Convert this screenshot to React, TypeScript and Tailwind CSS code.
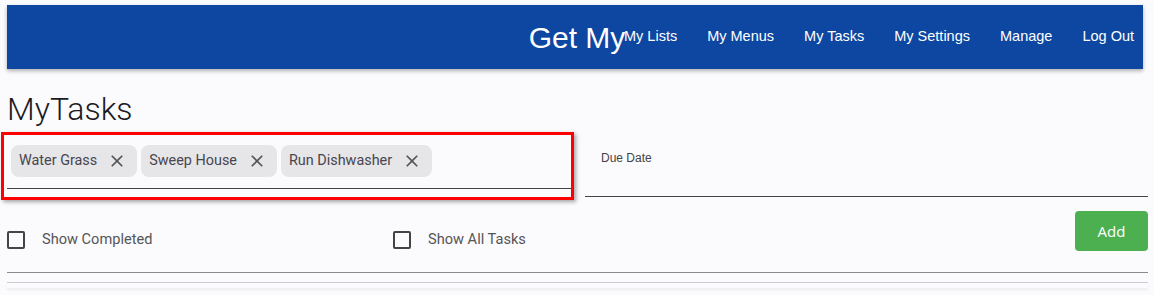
const navItems = ['My Lists', 'My Menus', 'My Tasks', 'My Settings', 'Manage', 'Log Out'];
const tasks = ['Water Grass', 'Sweep House', 'Run Dishwasher'];

function CloseIcon() {
  return (
    <svg viewBox="0 0 24 24" className="w-[20px] h-[20px] fill-[#555]">
      <path d="M19 6.41 17.59 5 12 10.59 6.41 5 5 6.41 10.59 12 5 17.59 6.41 19 12 13.41 17.59 19 19 17.59 13.41 12z" />
    </svg>
  );
}

function Chip({ label }: { label: string }) {
  return (
    <div className="flex items-center h-[32px] rounded-[8px] bg-[#e6e6e9] pl-[8px] pr-[10px]">
      <span className="text-[14.4px] text-[#49454f]">{label}</span>
      <span className="ml-[10px]">
        <CloseIcon />
      </span>
    </div>
  );
}

function Checkbox({ label }: { label: string }) {
  return (
    <label className="flex items-center">
      <span className="w-[18px] h-[18px] border-2 border-[#444] rounded-[2px]" />
      <span className="ml-[17px] text-[14.6px] text-[#555]">{label}</span>
    </label>
  );
}

export default function App() {
  return (
    <div className="relative min-h-screen bg-[#fbfbfe] pt-[5px] font-['Roboto',sans-serif]">
      <header className="ml-[7px] w-[1136px] h-[64px] bg-[#0d47a1] shadow-[0_2px_4px_rgba(0,0,0,0.3)] flex items-center justify-end gap-[30px] pr-[9px] font-['Liberation_Sans',Arial,sans-serif]">
        {navItems.map((item) => (
          <a key={item} className="text-[14.5px] text-white">
            {item}
          </a>
        ))}
      </header>
      <div className="absolute top-[5px] left-1/2 -translate-x-1/2 h-[64px] flex items-center text-[30px] text-white font-['Liberation_Sans',Arial,sans-serif] pointer-events-none">
        Get My
      </div>

      <main className="pl-[7px] pr-[6px]">
        <h1 className="mt-[21px] text-[32px] leading-[38px] font-light text-[#1c1b1f]">MyTasks</h1>

        <div className="flex">
          <div className="w-[564px]">
            <div className="mt-[4px] -ml-[6px] w-[573px] h-[68px] border-[3px] border-[#ff0000] shadow-[2px_2px_4px_rgba(0,0,0,0.35)] pl-[3px]">
              <div className="pt-[10px] pb-[11px] border-b border-[#444]">
                <div className="flex gap-[4px] pl-[4px]">
                  {tasks.map((t) => (
                    <Chip key={t} label={t} />
                  ))}
                </div>
              </div>
            </div>
          </div>
          <div className="flex-1 ml-[14px]">
            <div className="mt-[4px] h-[65px] border-b border-[#444] pl-[16px] pt-[13px]">
              <span className="text-[12px] leading-[14px] text-[#444] font-['Liberation_Sans',Arial,sans-serif]">
                Due Date
              </span>
            </div>
          </div>
        </div>

        <div className="flex mt-[11px]">
          <div className="w-[386px] mt-[18px]">
            <Checkbox label="Show Completed" />
          </div>
          <div className="mt-[18px]">
            <Checkbox label="Show All Tasks" />
          </div>
          <button className="ml-auto w-[73px] h-[40px] rounded-[4px] bg-[#4caf50] text-white text-[15px] font-['Open_Sans',sans-serif]">
            Add
          </button>
        </div>

        <div className="mt-[21px] border-t border-[#8a8a8a]" />
        <div className="mt-[9px] h-[6px] border-t border-[#c9ced6] shadow-[0_2px_3px_rgba(0,0,0,0.06)]" />
      </main>
    </div>
  );
}
